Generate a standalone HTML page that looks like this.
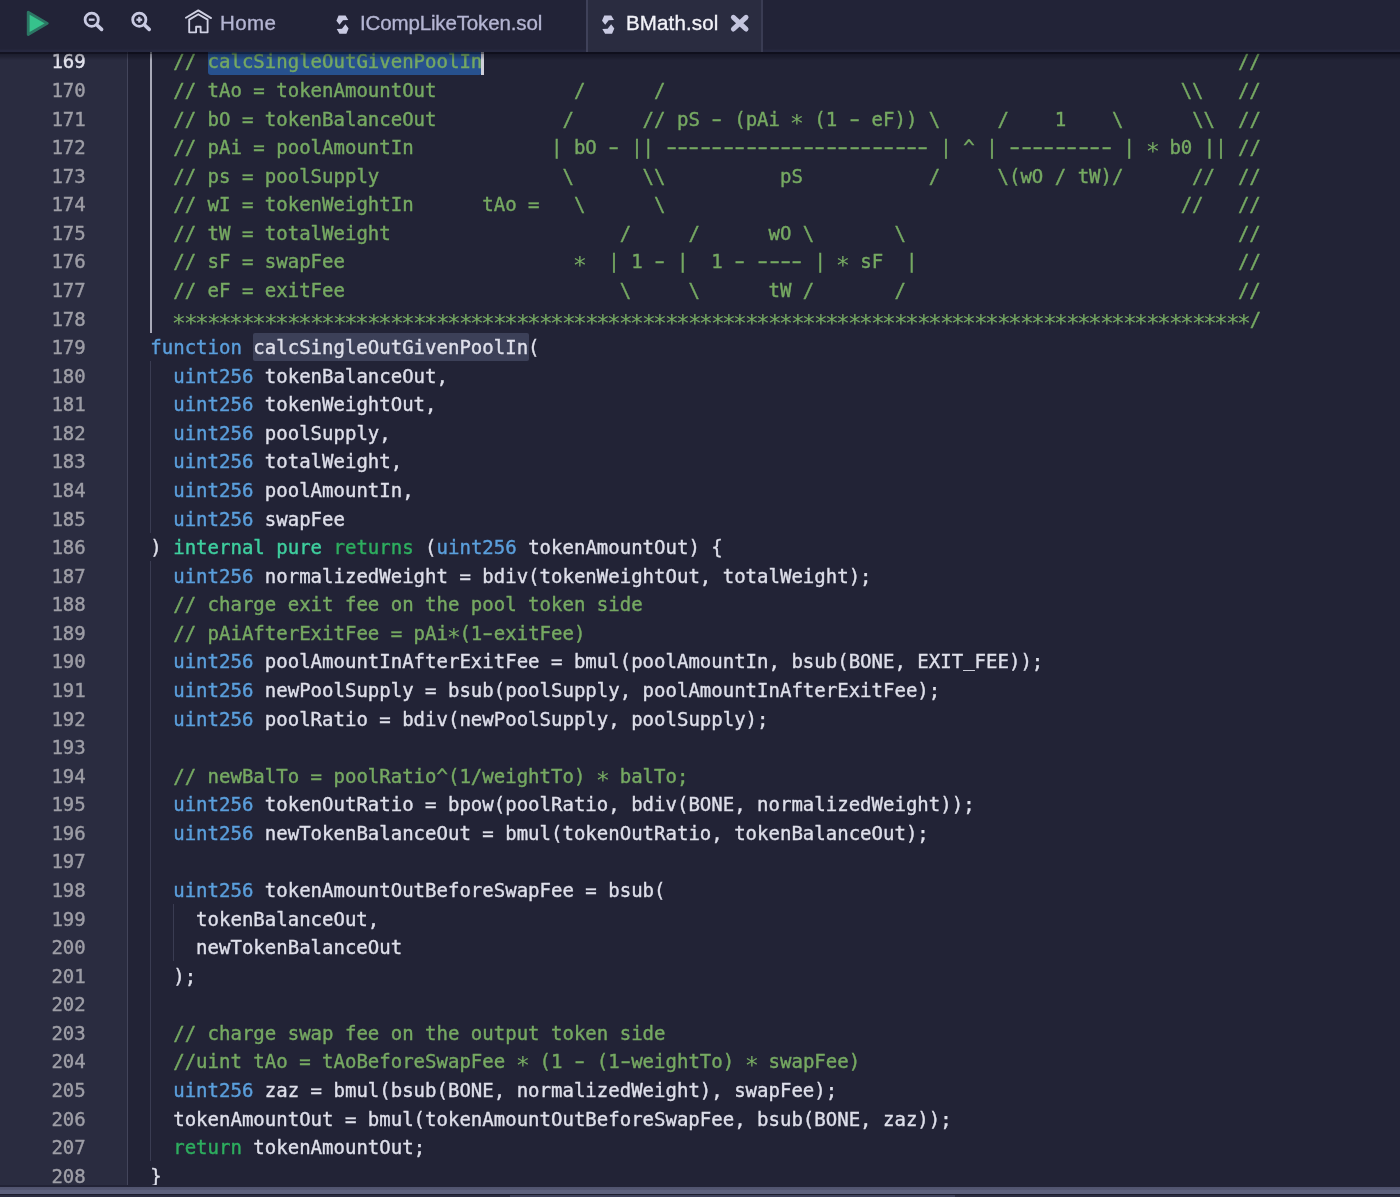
<!DOCTYPE html>
<html lang="en">
<head>
<meta charset="utf-8">
<title>BMath.sol - Remix</title>
<style>
html,body{margin:0;padding:0;}
body{width:1400px;height:1197px;overflow:hidden;background:#222336;position:relative;
  font-family:"Liberation Sans",sans-serif;}
#ed{position:absolute;left:0;top:0;width:1400px;height:1185px;overflow:hidden;background:#222336;}
#txt{position:absolute;left:0;top:0;width:1400px;height:1197px;will-change:transform;}
#gut{position:absolute;left:0;top:0;width:127px;height:1197px;background:#2a2c40;border-right:1.6px solid #43455b;}
.ln,.cl{position:absolute;height:28.55px;line-height:28.55px;white-space:pre;
  font-family:"DejaVu Sans Mono","Liberation Mono",monospace;font-size:19.025px;-webkit-text-stroke:0.4px currentColor;}
.ln{left:0;width:85.75px;text-align:right;color:#9e9ea6;}
.ln.a{color:#e4e4ee;}
.cl{left:150.30px;color:#dedfea;}
.c{color:#76a962;}
.b{color:#5b9fdc;}
.t{color:#3fcf9f;}
.g{color:#2eae5f;}
.s,.h,.u{display:inline-block;font-style:normal;}
.u{transform:translateY(-2px);}
.s{transform:translateY(3px) scale(1.24);-webkit-text-stroke:0;}
.h{transform:scaleX(1.55);}
.sel{position:absolute;height:28.57px;background:#27518e;border-radius:3px;}
.wh{position:absolute;height:28.57px;background:#3c4058;border-radius:2px;}
.cur{position:absolute;width:2.8px;height:28.57px;background:#d0d0da;}
.ig{position:absolute;width:1.2px;background:#3a3c52;}
.ig.act{background:#a9aab8;width:1.7px;}
#hdr{position:absolute;left:0;top:0;width:1400px;height:51.6px;background:linear-gradient(#222337 0,#222337 94%,#26283f 97%,#26283f 100%);}
#shd{position:absolute;left:0;top:51.6px;width:1400px;height:8px;background:linear-gradient(to bottom,rgba(0,0,8,.55) 0,rgba(0,0,8,.55) 22%,rgba(0,0,8,.27) 32%,rgba(0,0,8,.2) 60%,rgba(0,0,8,0) 100%);}
#hdr svg{position:absolute;left:0;top:0;}
.tab{position:absolute;top:0;height:51.6px;}
#act{left:585.8px;width:173.6px;background:#2a2c40;border-left:2px solid #3f4159;border-right:2px solid #3a3c53;}
.tt{position:absolute;top:0;height:46px;line-height:46px;font-size:20.5px;white-space:nowrap;color:#b4b5d2;will-change:transform;-webkit-text-stroke:0.35px currentColor;}
#bbar{position:absolute;left:0;top:1186.5px;width:1400px;height:7.5px;background:linear-gradient(#50536e 0,#555873 40%,#5d617d 47%,#5d617d 100%);}
#bbar2{position:absolute;left:0;top:1194px;width:1400px;height:3px;background:#2a2c40;border-top:1px solid #1d1e2e;}
#bthumb{position:absolute;left:510px;top:1195px;width:445px;height:2px;background:#3d405a;}
</style>
</head>
<body>
<div id="ed">
<div id="gut"></div>
<div id="txt">
<div class="sel" style="left:207.6px;top:46.85px;width:274.9px"></div>
<div class="wh" style="left:253.4px;top:332.54px;width:275.9px"></div>
<div class="cur" style="left:481.4px;top:46.85px"></div>
<div class="ig act" style="left:150.3px;top:46.85px;height:285.7px"></div>
<div class="ig" style="left:150.3px;top:361.11px;height:171.4px"></div>
<div class="ig" style="left:150.3px;top:561.09px;height:599.9px"></div>
<div class="ig" style="left:173.2px;top:903.92px;height:57.1px"></div>
<div class="ln a" style="top:47.00px">169</div>
<div class="ln" style="top:76.00px">170</div>
<div class="ln" style="top:105.00px">171</div>
<div class="ln" style="top:133.00px">172</div>
<div class="ln" style="top:162.00px">173</div>
<div class="ln" style="top:190.00px">174</div>
<div class="ln" style="top:219.00px">175</div>
<div class="ln" style="top:247.00px">176</div>
<div class="ln" style="top:276.00px">177</div>
<div class="ln" style="top:305.00px">178</div>
<div class="ln" style="top:333.00px">179</div>
<div class="ln" style="top:362.00px">180</div>
<div class="ln" style="top:390.00px">181</div>
<div class="ln" style="top:419.00px">182</div>
<div class="ln" style="top:447.00px">183</div>
<div class="ln" style="top:476.00px">184</div>
<div class="ln" style="top:505.00px">185</div>
<div class="ln" style="top:533.00px">186</div>
<div class="ln" style="top:562.00px">187</div>
<div class="ln" style="top:590.00px">188</div>
<div class="ln" style="top:619.00px">189</div>
<div class="ln" style="top:647.00px">190</div>
<div class="ln" style="top:676.00px">191</div>
<div class="ln" style="top:705.00px">192</div>
<div class="ln" style="top:733.00px">193</div>
<div class="ln" style="top:762.00px">194</div>
<div class="ln" style="top:790.00px">195</div>
<div class="ln" style="top:819.00px">196</div>
<div class="ln" style="top:847.00px">197</div>
<div class="ln" style="top:876.00px">198</div>
<div class="ln" style="top:905.00px">199</div>
<div class="ln" style="top:933.00px">200</div>
<div class="ln" style="top:962.00px">201</div>
<div class="ln" style="top:990.00px">202</div>
<div class="ln" style="top:1019.00px">203</div>
<div class="ln" style="top:1047.00px">204</div>
<div class="ln" style="top:1076.00px">205</div>
<div class="ln" style="top:1105.00px">206</div>
<div class="ln" style="top:1133.00px">207</div>
<div class="ln" style="top:1162.00px">208</div>
<div class="cl" style="top:47.00px">  <span class="c">// calcSingleOutGivenPoolIn                                                                  //</span></div>
<div class="cl" style="top:76.00px">  <span class="c">// tAo = tokenAmountOut            /      /                                             \\   //</span></div>
<div class="cl" style="top:105.00px">  <span class="c">// bO = tokenBalanceOut           /      // pS <i class="h">-</i> (pAi <i class="s">*</i> (1 <i class="h">-</i> eF)) \     /    1    \      \\  //</span></div>
<div class="cl" style="top:133.00px">  <span class="c">// pAi = poolAmountIn            | bO <i class="h">-</i> || <i class="h">-</i><i class="h">-</i><i class="h">-</i><i class="h">-</i><i class="h">-</i><i class="h">-</i><i class="h">-</i><i class="h">-</i><i class="h">-</i><i class="h">-</i><i class="h">-</i><i class="h">-</i><i class="h">-</i><i class="h">-</i><i class="h">-</i><i class="h">-</i><i class="h">-</i><i class="h">-</i><i class="h">-</i><i class="h">-</i><i class="h">-</i><i class="h">-</i><i class="h">-</i> | ^ | <i class="h">-</i><i class="h">-</i><i class="h">-</i><i class="h">-</i><i class="h">-</i><i class="h">-</i><i class="h">-</i><i class="h">-</i><i class="h">-</i> | <i class="s">*</i> b0 || //</span></div>
<div class="cl" style="top:162.00px">  <span class="c">// ps = poolSupply                \      \\          pS           /     \(wO / tW)/      //  //</span></div>
<div class="cl" style="top:190.00px">  <span class="c">// wI = tokenWeightIn      tAo =   \      \                                             //   //</span></div>
<div class="cl" style="top:219.00px">  <span class="c">// tW = totalWeight                    /     /      wO \       \                             //</span></div>
<div class="cl" style="top:247.00px">  <span class="c">// sF = swapFee                    <i class="s">*</i>  | 1 <i class="h">-</i> |  1 <i class="h">-</i> <i class="h">-</i><i class="h">-</i><i class="h">-</i><i class="h">-</i> | <i class="s">*</i> sF  |                            //</span></div>
<div class="cl" style="top:276.00px">  <span class="c">// eF = exitFee                        \     \      tW /       /                             //</span></div>
<div class="cl" style="top:305.00px">  <span class="c"><i class="s">*</i><i class="s">*</i><i class="s">*</i><i class="s">*</i><i class="s">*</i><i class="s">*</i><i class="s">*</i><i class="s">*</i><i class="s">*</i><i class="s">*</i><i class="s">*</i><i class="s">*</i><i class="s">*</i><i class="s">*</i><i class="s">*</i><i class="s">*</i><i class="s">*</i><i class="s">*</i><i class="s">*</i><i class="s">*</i><i class="s">*</i><i class="s">*</i><i class="s">*</i><i class="s">*</i><i class="s">*</i><i class="s">*</i><i class="s">*</i><i class="s">*</i><i class="s">*</i><i class="s">*</i><i class="s">*</i><i class="s">*</i><i class="s">*</i><i class="s">*</i><i class="s">*</i><i class="s">*</i><i class="s">*</i><i class="s">*</i><i class="s">*</i><i class="s">*</i><i class="s">*</i><i class="s">*</i><i class="s">*</i><i class="s">*</i><i class="s">*</i><i class="s">*</i><i class="s">*</i><i class="s">*</i><i class="s">*</i><i class="s">*</i><i class="s">*</i><i class="s">*</i><i class="s">*</i><i class="s">*</i><i class="s">*</i><i class="s">*</i><i class="s">*</i><i class="s">*</i><i class="s">*</i><i class="s">*</i><i class="s">*</i><i class="s">*</i><i class="s">*</i><i class="s">*</i><i class="s">*</i><i class="s">*</i><i class="s">*</i><i class="s">*</i><i class="s">*</i><i class="s">*</i><i class="s">*</i><i class="s">*</i><i class="s">*</i><i class="s">*</i><i class="s">*</i><i class="s">*</i><i class="s">*</i><i class="s">*</i><i class="s">*</i><i class="s">*</i><i class="s">*</i><i class="s">*</i><i class="s">*</i><i class="s">*</i><i class="s">*</i><i class="s">*</i><i class="s">*</i><i class="s">*</i><i class="s">*</i><i class="s">*</i><i class="s">*</i><i class="s">*</i><i class="s">*</i><i class="s">*</i>/</span></div>
<div class="cl" style="top:333.00px"><span class="b">function</span> calcSingleOutGivenPoolIn(</div>
<div class="cl" style="top:362.00px">  <span class="b">uint256</span> tokenBalanceOut,</div>
<div class="cl" style="top:390.00px">  <span class="b">uint256</span> tokenWeightOut,</div>
<div class="cl" style="top:419.00px">  <span class="b">uint256</span> poolSupply,</div>
<div class="cl" style="top:447.00px">  <span class="b">uint256</span> totalWeight,</div>
<div class="cl" style="top:476.00px">  <span class="b">uint256</span> poolAmountIn,</div>
<div class="cl" style="top:505.00px">  <span class="b">uint256</span> swapFee</div>
<div class="cl" style="top:533.00px">) <span class="t">internal</span> <span class="t">pure</span> <span class="g">returns</span> (<span class="b">uint256</span> tokenAmountOut) {</div>
<div class="cl" style="top:562.00px">  <span class="b">uint256</span> normalizedWeight = bdiv(tokenWeightOut, totalWeight);</div>
<div class="cl" style="top:590.00px">  <span class="c">// charge exit fee on the pool token side</span></div>
<div class="cl" style="top:619.00px">  <span class="c">// pAiAfterExitFee = pAi<i class="s">*</i>(1<i class="h">-</i>exitFee)</span></div>
<div class="cl" style="top:647.00px">  <span class="b">uint256</span> poolAmountInAfterExitFee = bmul(poolAmountIn, bsub(BONE, EXIT<i class="u">_</i>FEE));</div>
<div class="cl" style="top:676.00px">  <span class="b">uint256</span> newPoolSupply = bsub(poolSupply, poolAmountInAfterExitFee);</div>
<div class="cl" style="top:705.00px">  <span class="b">uint256</span> poolRatio = bdiv(newPoolSupply, poolSupply);</div>
<div class="cl" style="top:733.00px"></div>
<div class="cl" style="top:762.00px">  <span class="c">// newBalTo = poolRatio^(1/weightTo) <i class="s">*</i> balTo;</span></div>
<div class="cl" style="top:790.00px">  <span class="b">uint256</span> tokenOutRatio = bpow(poolRatio, bdiv(BONE, normalizedWeight));</div>
<div class="cl" style="top:819.00px">  <span class="b">uint256</span> newTokenBalanceOut = bmul(tokenOutRatio, tokenBalanceOut);</div>
<div class="cl" style="top:847.00px"></div>
<div class="cl" style="top:876.00px">  <span class="b">uint256</span> tokenAmountOutBeforeSwapFee = bsub(</div>
<div class="cl" style="top:905.00px">    tokenBalanceOut,</div>
<div class="cl" style="top:933.00px">    newTokenBalanceOut</div>
<div class="cl" style="top:962.00px">  );</div>
<div class="cl" style="top:990.00px"></div>
<div class="cl" style="top:1019.00px">  <span class="c">// charge swap fee on the output token side</span></div>
<div class="cl" style="top:1047.00px">  <span class="c">//uint tAo = tAoBeforeSwapFee <i class="s">*</i> (1 <i class="h">-</i> (1<i class="h">-</i>weightTo) <i class="s">*</i> swapFee)</span></div>
<div class="cl" style="top:1076.00px">  <span class="b">uint256</span> zaz = bmul(bsub(BONE, normalizedWeight), swapFee);</div>
<div class="cl" style="top:1105.00px">  tokenAmountOut = bmul(tokenAmountOutBeforeSwapFee, bsub(BONE, zaz));</div>
<div class="cl" style="top:1133.00px">  <span class="g">return</span> tokenAmountOut;</div>
<div class="cl" style="top:1162.00px">}</div>
</div>
</div>
<div id="hdr">
  <div class="tab" id="act"></div>
  <svg width="1400" height="51" viewBox="0 0 1400 51">
    <!-- run -->
    <polygon points="28.2,12.3 28.2,34.5 47.3,23.4" fill="#36c28c" stroke="#2c7664" stroke-width="2.8" stroke-linejoin="round"/>
    <!-- zoom out -->
    <g fill="none" stroke="#c9cae2">
      <circle cx="91.7" cy="19.7" r="6.6" stroke-width="2.8"/>
      <line x1="97.2" y1="25.2" x2="101.6" y2="29.4" stroke-width="3.6" stroke-linecap="round"/>
      <line x1="88.8" y1="19.7" x2="94.6" y2="19.7" stroke-width="2.3"/>
    </g>
    <!-- zoom in -->
    <g fill="none" stroke="#c9cae2">
      <circle cx="139.3" cy="19.7" r="6.6" stroke-width="2.8"/>
      <line x1="144.8" y1="25.2" x2="149.2" y2="29.4" stroke-width="3.6" stroke-linecap="round"/>
      <line x1="136.4" y1="19.7" x2="142.2" y2="19.7" stroke-width="2.3"/>
      <line x1="139.3" y1="16.8" x2="139.3" y2="22.6" stroke-width="2.3"/>
    </g>
    <!-- home -->
    <g fill="none" stroke="#d0d1e3" stroke-width="1.85" stroke-linejoin="round" stroke-linecap="round">
      <polyline points="185.9,17.8 198.3,10.4 211.1,18.1"/>
      <polygon points="198.3,14.2 189.2,19.6 189.2,32.3 196.1,32.3 196.1,26.7 200.6,26.7 200.6,32.3 207.6,32.3 207.6,19.6"/>
    </g>
    <!-- sol icon 1 -->
    <g fill="#c9cae2" transform="translate(336.2,15.1) scale(1.05,0.97)">
      <polygon points="2.3,0.3 8.9,0.3 11.5,5 6.5,5.4 3.2,10 0.2,5.7"/>
      <polygon points="9.7,19.1 3.1,19.1 0.5,14.4 5.5,14 8.8,9.4 11.8,13.7"/>
    </g>
    <!-- sol icon 2 -->
    <g fill="#c9cae2" transform="translate(601.8,15.1) scale(1.06,0.97)">
      <polygon points="2.3,0.3 8.9,0.3 11.5,5 6.5,5.4 3.2,10 0.2,5.7"/>
      <polygon points="9.7,19.1 3.1,19.1 0.5,14.4 5.5,14 8.8,9.4 11.8,13.7"/>
    </g>
    <!-- close -->
    <g stroke="#c4c5de" stroke-width="5" stroke-linecap="round">
      <line x1="733.4" y1="17.3" x2="746" y2="29"/>
      <line x1="746" y1="17.3" x2="733.4" y2="29"/>
    </g>
  </svg>
  <div class="tt" style="left:219.8px;letter-spacing:0.4px">Home</div>
  <div class="tt" style="left:359.6px;letter-spacing:-0.14px">ICompLikeToken.sol</div>
  <div class="tt" style="left:625.7px;letter-spacing:0.15px;color:#f2f2f8">BMath.sol</div>
</div>
<div id="shd"></div>
<div id="bbar"></div>
<div id="bbar2"></div>
<div id="bthumb"></div>
</body>
</html>
